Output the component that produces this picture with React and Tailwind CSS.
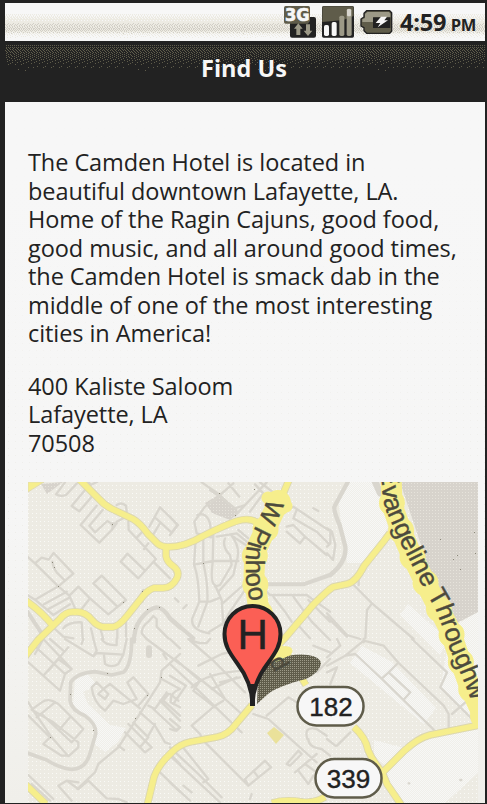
import React from "react";

const TILE = 120;

/* Floyd-Steinberg diffusion of a vertical density curve into one-pixel dots. */
function ditherPath(height, density) {
  let d = "";
  let row = new Array(TILE).fill(0);
  for (let y = 0; y < height; y++) {
    const next = new Array(TILE).fill(0);
    const target = density(y);
    for (let x = 0; x < TILE; x++) {
      const value = target <= 0 ? 0 : target + row[x];
      const on = value > 0.5;
      if (on) d += `M${x} ${y}h1v1h-1z`;
      const err = value - (on ? 1 : 0);
      if (x + 1 < TILE) row[x + 1] += (err * 7) / 16;
      next[(x + TILE - 1) % TILE] += (err * 3) / 16;
      next[x] += (err * 5) / 16;
      next[(x + 1) % TILE] += err / 16;
    }
    row = next;
  }
  return d;
}

const interp = (stops) => (y) => {
  for (let i = 1; i < stops.length; i++) {
    const [a, u] = stops[i - 1];
    const [b, v] = stops[i];
    if (y >= a && y <= b) return u + ((v - u) * (y - a)) / (b - a);
  }
  return 0;
};

const CREAM = ditherPath(38, interp([[9, 0], [11, 0.3], [14, 0.6], [18, 0.95], [20, 1], [28, 1], [30, 0.6], [33, 0.2], [36, 0]]));
const GREY = ditherPath(38, interp([[19, 0], [20, 0.3], [23, 0.4], [26, 0.55], [28, 0.35], [30, 0.1], [31, 0]]));
const OLIVE = ditherPath(60, interp([[3, 0], [4, 0.5], [5, 0.12], [6, 0.35], [10, 0.33], [15, 0.24], [20, 0.14], [24, 0.06], [29, 0.02], [32, 0]]));

function Dither({ id, height, layers }) {
  return (
    <svg className="col-start-1 row-start-1 h-full w-full" shapeRendering="crispEdges">
      <defs>
        <pattern id={id} width={TILE} height={height} patternUnits="userSpaceOnUse">
          {layers.map(([fill, d]) => (
            <path key={fill} fill={fill} d={d} />
          ))}
        </pattern>
      </defs>
      <rect width="100%" height={height} fill={`url(#${id})`} />
    </svg>
  );
}

function StatusIcons() {
  return (
    <svg width="112" height="38" viewBox="36 9 336 114" fill="none">
      {/* 3G data */}
      <path d="M66 51H132Q138 51 138 57V107Q138 113 132 113H66Q60 113 60 107V51Z" fill="#222" />
      <path d="M47 18H115Q120 18 120 23V62L114 71H47Q42 71 42 66V23Q42 18 47 18Z" fill="#5f5c4a" />
      <text x="45" y="63" fontFamily="DejaVu Sans" fontWeight="700" fontSize="52" textLength="74" lengthAdjust="spacingAndGlyphs" fill="#f7f7f7" stroke="#f7f7f7" strokeWidth="2">3G</text>
      <path d="M85 70L98 86H91V105H79V86H72Z" fill="#9c9987" />
      <path d="M114 108L101 92H108V73H120V92H127Z" fill="#9c9987" />
      {/* signal */}
      <rect x="156" y="18" width="96" height="95" rx="5" fill="#222" />
      <path d="M160 19H248Q251 19 251 24V48L220 60L157 66V24Q157 19 160 19Z" fill="#5f5c4a" />
      <rect x="162" y="75" width="15" height="33" rx="5" fill="#f7f7f7" />
      <rect x="185" y="66" width="15" height="42" rx="5" fill="#f7f7f7" />
      <rect x="208" y="47" width="15" height="61" rx="5" fill="#9c9987" />
      <rect x="230" y="26" width="15" height="82" rx="5" fill="#9c9987" />
      <rect x="231" y="27" width="12" height="22" rx="4" fill="#d8d5ce" />
      {/* battery */}
      <path d="M290 32H359L365 38V94L359 100H290L282 92V83L273 78V57L282 51V40Z" fill="#5f5c4a" stroke="#222" strokeWidth="4" />
      <path d="M292 36H357L361 41V52H310V66H277V58L285 54V42Z" fill="#9c9987" />
      <path d="M309 52H361V84H309Z" fill="#222" />
      <path d="M333 50H351L343 61H354L323 82L331 69H317Z" fill="#f7f7f7" />
    </svg>
  );
}

function StatusBar() {
  return (
    <div className="grid h-[38px] bg-[#f7f7f7]">
      <Dither id="status" height={38} layers={[["#edebe3", CREAM], ["#d2cfc6", GREY]]} />
      <div className="col-start-1 row-start-1 flex justify-end pr-[9px]">
        <StatusIcons />
        <div className="flex h-[38px] w-[82px] items-baseline justify-between pl-[6px] leading-[38px] font-bold whitespace-nowrap text-[#222]">
          <span className="text-[23.5px] tracking-[-0.2px]">4:59</span>
          <span className="text-[16.5px] tracking-[-0.3px]">PM</span>
        </div>
      </div>
    </div>
  );
}

function TitleBar() {
  return (
    <div className="grid h-[61px] bg-[#222]">
      <Dither id="title" height={60} layers={[["#5f5c4a", OLIVE]]} />
      <h1 className="col-start-1 row-start-1 pt-[9px] pr-[2px] text-center text-[23.5px] leading-9 font-bold text-[#f7f7f7]">Find Us</h1>
    </div>
  );
}

const LINES = [
  "The Camden Hotel is located in",
  "beautiful downtown Lafayette, LA.",
  "Home of the Ragin Cajuns, good food,",
  "good music, and all around good times,",
  "the Camden Hotel is smack dab in the",
  "middle of one of the most interesting",
  "cities in America!",
];
const ADDRESS = ["400 Kaliste Saloom", "Lafayette, LA", "70508"];

function Lines({ rows }) {
  return (
    <p className="flex flex-col text-[23.5px] leading-[28.5px] tracking-[-0.07px] whitespace-nowrap text-[#222]">
      {rows.map((text) => (
        <span key={text}>{text}</span>
      ))}
    </p>
  );
}

/* Each tile of side streets is drawn on a grid of thirds of a pixel. */
function Tile({ x, y, children }) {
  return <g transform={`translate(${x} ${y}) scale(0.33333)`}>{children}</g>;
}

const MAIN_ROADS = [
  "M79 479L98 498Q104 505 112 509L133 519Q140 523 148 534L158 544Q162 547 168 547Q185 547 203 536Q225 525 237 521Q250 517 258 523",
  "M166 548V556Q167 562 173 566Q180 571 177 578Q172 588 163 588H154Q148 590 143 596L127 616Q119 626 113 627H103Q97 626 92 620Q85 611 75 612Q66 611 60 619L38 640L24 658",
  "M25 600Q42 612 53 626",
  "M289 480L274 515L250 560L252 600",
  "M252 705L236 724Q228 735 217 737L190 742Q180 744 172 752Q158 765 154 777L147 806",
  "M390 533L384 541L364 566Q356 582 347 584L333 587Q328 590 313 605L285 638L262 662",
  "M272 803Q285 799 303 802Q315 803 325 797",
  "M283 648L306 685M354 727Q366 738 368 750Q372 760 382 772L387 784L402 806",
  "M381 774L404 751Q418 738 430 735L450 731L480 725",
  "M25 784L46 804",
];

const LABEL_BANDS = [
  "M391 474L392 505L402 533L412 556L424 580L437 605L450 630L459 657L468 682L484 718",
  "M278 503L267 526L255 552L254 575L258 604L264 632",
];

function MapView() {
  return (
    <svg className="block h-[321px] w-[450px]" viewBox="28 482 450 321" fill="none">
      <defs>
        <pattern id="speck" width="8" height="8" patternUnits="userSpaceOnUse">
          <path d="M0 1h1v1h-1zM4 5h1v1h-1zM4 1h1v1h-1zM0 5h1v1h-1z" fill="#fafaf7" />
        </pattern>
        <pattern id="pale" width="2" height="2" patternUnits="userSpaceOnUse">
          <path d="M0 0h2v2h-2z" fill="#f0efe9" />
          <path d="M0 0h1v1h-1zM1 1h1v1h-1z" fill="#f7f7f6" />
        </pattern>
        <pattern id="park" width="3" height="3" patternUnits="userSpaceOnUse">
          <path d="M0 0h3v3h-3z" fill="#d7d3cc" />
          <path d="M0 0h1v1h-1z" fill="#e6e3db" />
        </pattern>
        <pattern id="shade" width="2" height="2" patternUnits="userSpaceOnUse">
          <path d="M0 0h2v2h-2z" fill="#5f5c4a" />
          <path d="M0 0h1v1h-1z" fill="#9c9987" />
        </pattern>
        <path id="evangeline" d="M380 469L382 484Q382 500 388 515L398 538L410 561L424 589L436 610L445 634L449 647L457 665L467 689L481 725L500 770" />
        <path id="pinhook" d="M268 498L256 526Q247 541 246 554V580L250 602L256 635" />
      </defs>
      <rect x="28" y="482" width="450" height="321" fill="#edebe3" />
      <rect x="28" y="482" width="450" height="321" fill="url(#speck)" />

      {/* open ground */}
      <g fill="url(#pale)">
        <path d="M349 482H378L388 528L366 563H347L338 500Z" />
        <path d="M408 604L448 640L440 655L400 615Z" />
        <path d="M459 623L478 612V680L468 665Z" />
        <path d="M382 775L404 751Q418 738 430 735L478 726V773L445 803H398Z" />
        <path d="M362 646L392 662L436 708L424 724L350 663ZM447 650L478 710V720L440 690Z" />
        <path d="M75 680L88 674L97 685L83 692L88 704L110 725L126 728L118 742L105 752L95 744V730L85 717L73 705Z" />
        <path d="M374 740L404 748L385 765L374 757Z" />
      </g>
      <path d="M400 482H478V612L457 623L436 590Z" fill="url(#park)" />
      <path d="M41 484L63 482L47 494ZM205 503L220 494L240 512L230 520L212 513Z" fill="url(#park)" />

      <g stroke="#d9d6ce" strokeWidth="7" strokeLinejoin="round" strokeLinecap="round">
        <Tile x={20} y={475}>
          <path d="M135 22L108 58Q120 66 138 60L170 26M205 20L212 30L232 20M195 45L155 93L178 109L215 65M230 92L182 150L238 203L275 165Q285 150 262 138L225 172M248 105L208 152L225 172M275 165L290 145L275 145M290 140L318 125M290 90Q305 80 318 92L320 110M325 140L326 165L408 252L355 310L302 260L322 236L375 287M353 185L372 165M385 205L372 222M388 155L420 97L474 150L455 173L408 130M418 148L400 178M402 262L450 310M22 245L45 265L65 248L86 254L101 234L160 296L115 334L45 265M97 260Q100 280 110 292L133 315M45 374L115 334L148 362L175 335L210 370L265 418L318 375L245 302L220 325L292 395M210 370L185 402M45 374L22 360M45 374L100 420L150 388M72 388L140 350M85 402L145 370M148 362L165 400M370 345L355 375L368 380M130 460Q145 440 185 442L188 490M105 462L130 485L160 490M213 460L220 490M242 465L250 492M292 462V490M318 440V485" />
        </Tile>
        <Tile x={20} y={475}>
          <path d="M342 500Q342 460 360 435Q385 400 410 397Q430 397 450 430L480 457" strokeWidth="13" />
          <path d="M380 492L365 475Q365 455 385 440L400 423L410 432V455L445 490" />
          <path d="M22 410L65 475" strokeWidth="12" />
        </Tile>
        <Tile x={170} y={475}>
          <path d="M120 45L150 65L195 100L225 90M148 65L105 95L73 140L80 175L123 187M95 22L150 60L190 25M175 25L208 65M290 22L195 122M255 28L280 55L240 110M270 22L318 58M82 120Q110 110 120 145L125 185M0 125L22 150L0 180M77 195L72 270Q85 300 88 380L67 430Q60 465 118 475M100 190V265Q115 330 112 380L85 455M130 180L128 262Q120 325 135 330L155 375L160 450M77 268L128 258L205 258M165 190Q155 215 180 240L185 270L150 330L135 335M185 182Q215 220 198 265L190 300L145 350L158 385L220 330M140 185L200 175L230 200M88 380H120L150 368M225 345L180 410L160 445L118 470M325 120L370 95L475 165M350 155L370 150L405 185L390 205L350 170M380 105L370 130L440 170L475 205M405 185L470 240M430 100L445 108M285 345L300 360H410L480 410M310 365L345 410L365 440M370 365L425 440L480 495M415 375L480 440M375 440L420 490M15 370L25 380M40 400L50 390M0 335L20 318" />
          <path d="M290 328H400L480 300M0 430L70 490" strokeWidth="12" />
          <path d="M190 185L235 215M205 165L235 190" />
        </Tile>
        <Tile x={327} y={475}>
          <path d="M62 22L22 95Q20 110 38 150L55 215Q60 260 10 300" strokeWidth="13" />
          <path d="M145 22L160 55" strokeWidth="20" />
          <path d="M0 160L15 170L25 210L18 255L0 235M10 165V205L0 215M80 330L135 385L260 492M135 385L120 405L115 490M0 415L60 480L100 492M95 310V330M300 335L340 385" />
          <path d="M0 425L60 485" />
        </Tile>
        <Tile x={0} y={639}>
          <path d="M395 0Q395 80 370 100L335 108L285 98Q230 102 212 130L210 185Q215 215 255 230Q290 255 287 285L268 350Q255 390 215 391Q180 388 140 363L85 343" strokeWidth="11" />
          <path d="M105 22L195 105L180 155L85 70M130 0L215 90L195 105M105 45L130 0M130 110L205 25M145 95L175 60L215 90M150 0L190 35M195 0L280 52L290 42L370 47L355 75Q335 88 315 75L312 48M245 15L250 0M280 52L290 35L280 0M305 0Q315 20 350 18V0M370 47L380 0M85 190L100 215L155 295L205 352L235 325L235 310L160 250L95 212L125 190Q145 175 175 195L250 270L215 310L125 225M85 230L150 295L130 315L185 350L205 350M180 270L210 235M165 190L110 235M290 130L275 145Q280 190 315 215L340 185L370 195L410 180L382 130L400 115L445 165L415 200M290 130L310 150L330 135L420 208M310 150L295 165L315 180L325 165ZM235 450L265 425L320 478L355 480L380 490M235 450L200 425L175 440L215 485M200 425L235 430M85 408L160 480M95 435L150 485M375 280L435 340L455 325L385 255M400 250L445 295L420 325M420 220L465 260L495 310L510 315M465 255L445 290M460 210L530 275L540 265M480 185L540 245M500 160L465 210L445 200M505 165L490 185L540 230M485 120L540 150M540 150Q510 160 512 190L540 205M480 400L540 458M515 350L540 375M440 0L500 45L540 75M490 45L500 60M510 0L540 28" />
          <path d="M540 45L485 95L480 130L355 325L295 375L285 400L232 450M355 320L372 333" />
          <path d="M447 28V48" strokeWidth="18" />
        </Tile>
        <Tile x={170} y={639}>
          <path d="M0 75L60 130L215 280M15 60L90 125L70 155L135 205M0 110L48 140L10 195M0 165L25 185M45 85L90 120L165 180L215 225M55 0L130 65L225 160M60 0Q80 15 110 12L120 0M85 80L155 45L200 35M65 145Q110 100 225 95M120 105L165 180M150 130L210 115M125 150L200 115M65 260L135 200L160 185M65 260L90 285L100 305L235 440M0 240L30 265L15 275L0 270M0 325L85 405L155 475M0 350L150 490M35 320L115 420L100 430M0 430L60 485M40 440L65 460M225 420L285 365L303 385L235 440L225 420M250 395L265 415M245 465L240 480M250 225L295 240L440 370M290 230L355 175L380 190M350 375L385 335L395 345L360 380ZM375 400L440 345M385 395L415 435L430 410M405 375L440 400M412 300Q400 260 440 270L470 290M415 300Q415 325 455 330L480 350M440 100L480 60M430 20L480 40" />
        </Tile>
        <Tile x={327} y={639}>
          <path d="M0 80L55 50L85 45L165 120L320 272M55 50L110 5L170 20L215 72L350 200L365 225V265M255 0L360 100L340 145L435 240M375 225L415 190M165 118L185 100L250 160L230 182M185 100L210 75M0 55L40 20L30 0M110 0V10M0 100L30 85L10 135M30 320L70 280M0 300L25 320M245 433H247M400 423H403" />
        </Tile>
      </g>

      <path d="M28 482H44L28 492Z" fill="#f6ee8c" stroke="#e2dbb0" />
      <g strokeLinejoin="round">
        {MAIN_ROADS.map((d) => (
          <path key={d} d={d} stroke="#dcd7ae" strokeWidth="7.5" />
        ))}
        {MAIN_ROADS.map((d) => (
          <path key={d} d={d} stroke="#f6ee8c" strokeWidth="5.8" />
        ))}
      </g>
      <path d="M267 733L274 727L284 735L276 744Z" fill="#eae19a" />
      <g fill="#8a8777">
        <path d="M112 524h1v1h-1zM52 562h1v1h-1zM54 567h1v1h-1zM58 586h1v1h-1zM123 602h1v1h-1zM142 591h1v1h-1zM147 609h1v1h-1zM159 607h1v1h-1zM134 628h1v1h-1zM219 493h1v1h-1zM254 489h1v1h-1zM235 515h1v1h-1zM203 563h1v1h-1zM70 694h1v1h-1zM93 730h1v1h-1zM107 673h1v1h-1zM135 718h1v1h-1zM147 695h1v1h-1zM161 677h1v1h-1zM50 737h1v1h-1zM457 555h1v1h-1zM453 559h1v1h-1zM475 553h1v1h-1zM474 532h1v1h-1zM460 569h1v1h-1zM440 539h1v1h-1z" />
      </g>

      {/* marker shadow */}
      <path d="M257 704L258 677Q263 664 275 660Q293 653 308 655Q321 657 321 664Q319 673 306 679Q278 686 268 694Z" fill="url(#shade)" />

      {/* street names */}
      <g stroke="#f6ee8c" strokeLinecap="round" strokeLinejoin="round">
        <path d="M273 650L288 651L276 657" strokeWidth="9" />
        {LABEL_BANDS.map((d) => (
          <path key={d} d={d} strokeWidth="21" />
        ))}
        {LABEL_BANDS.map((d) => (
          <path key={d} d={d} strokeWidth="26" strokeDasharray="0 29" />
        ))}
        <path d="M268 498L286 506" strokeWidth="13" />
      </g>
      <g fontFamily="Liberation Sans, Arial, sans-serif" fill="#4c4a3d" stroke="#4c4a3d" strokeWidth="0.4">
        <text fontSize="26"><textPath href="#evangeline">Evangeline Throughw</textPath></text>
        <text fontSize="25.5" wordSpacing="-2"><textPath href="#pinhook">W Pinhoo</textPath></text>
        <text x="269" y="661" fontSize="24" transform="rotate(62 269 661)">d</text>
      </g>

      {/* marker */}
      <path d="M252.5 704C252 690 247 676 237 663C229 652 224.500 645 224.500 634A28 28 0 0 1 280.500 634C280.500 645 276 652 268 663C258 676 253 690 252.500 704Z" fill="#fb5f55" stroke="#222" strokeWidth="4" strokeLinejoin="round" />
      <path d="M252.500 684V706" stroke="#222" strokeWidth="5" />
      <text x="252.700" y="649" textAnchor="middle" fontSize="42" fontFamily="Liberation Sans, Arial, sans-serif" fill="#222" stroke="#222" strokeWidth="0.5">H</text>

      {/* route shields */}
      <g fill="#f7f7f7" stroke="#5f5c4a" strokeWidth="2.500">
        <rect x="297.500" y="687" width="66" height="38.500" rx="19" />
        <rect x="315.500" y="759" width="66" height="38.500" rx="19" />
      </g>
      <g fill="#222" stroke="#222" strokeWidth="0.400" fontFamily="Liberation Sans, Arial, sans-serif" fontSize="26" textAnchor="middle">
        <text x="331" y="715.500">182</text>
        <text x="348.500" y="788">339</text>
      </g>
    </svg>
  );
}

export default function App() {
  return (
    <div className="h-[804px] w-[487px] overflow-hidden bg-[#222] pt-[3px] pr-[2px] pb-px pl-[5px] font-['Open_Sans','Noto_Sans',sans-serif]">
      <StatusBar />
      <TitleBar />
      <main className="flex h-[701px] flex-col bg-[#f7f7f7] bg-[radial-gradient(circle_at_center,#e2e0d8_0.7px,transparent_0.8px)] bg-[size:7px_7px]">
        <div className="flex h-full flex-col justify-between bg-linear-to-b from-[#f7f7f7] from-10% via-[#f5f5f4]/60 via-60% to-[#f0efea] pl-[23px] pt-[46px]">
          <div className="flex flex-col gap-6">
            <Lines rows={LINES} />
            <Lines rows={ADDRESS} />
          </div>
          <MapView />
        </div>
      </main>
    </div>
  );
}
